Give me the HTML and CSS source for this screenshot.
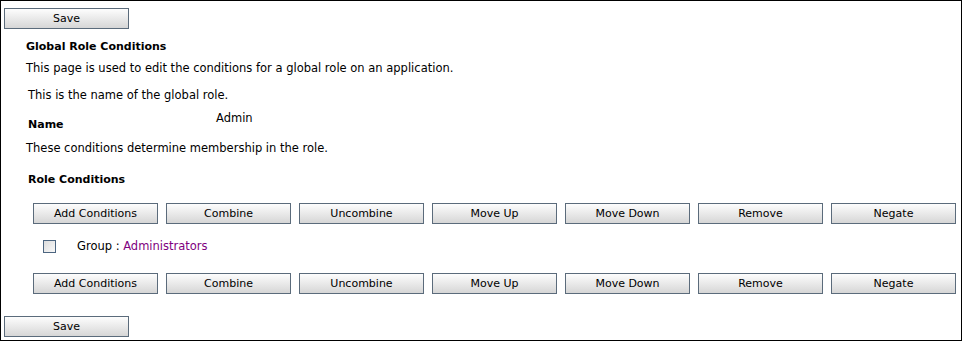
FILE: index.html
```html
<!DOCTYPE html>
<html lang="en">
<head>
    <meta charset="utf-8">
    <title>Global Role Conditions</title>
    <link rel="stylesheet" href="styles.css">
</head>
<body>
    <div class="page">
        <div class="save-bar">
            <button class="btn save">Save</button>
        </div>

        <div class="content">
            <h2 class="title">Global Role Conditions</h2>
            <p class="intro">This page is used to edit the conditions for a global role on an application.</p>

            <p class="help">This is the name of the global role.</p>
            <div class="name-row">
                <span class="label">Name</span>
                <span class="value">Admin</span>
            </div>

            <p class="intro conditions-help">These conditions determine membership in the role.</p>
            <h3 class="label section-label">Role Conditions</h3>

            <!-- toolbar top -->
            <div class="toolbar">
                <button class="btn">Add Conditions</button>
                <button class="btn">Combine</button>
                <button class="btn">Uncombine</button>
                <button class="btn">Move Up</button>
                <button class="btn">Move Down</button>
                <button class="btn">Remove</button>
                <button class="btn">Negate</button>
            </div>

            <div class="condition">
                <input type="checkbox" class="check">
                <span>Group : <a class="group-link">Administrators</a></span>
            </div>

            <!-- toolbar bottom -->
            <div class="toolbar">
                <button class="btn">Add Conditions</button>
                <button class="btn">Combine</button>
                <button class="btn">Uncombine</button>
                <button class="btn">Move Up</button>
                <button class="btn">Move Down</button>
                <button class="btn">Remove</button>
                <button class="btn">Negate</button>
            </div>
        </div>

        <div class="save-bar bottom">
            <button class="btn save">Save</button>
        </div>
    </div>
</body>
</html>
```

FILE: styles.css
```css
body {
    margin: 0;
    background: #fff;
    font-family: 'DejaVu Sans', Verdana, sans-serif;
    font-size: 11.5px;
    line-height: 15px;
    color: #000;
}

.page {
    box-sizing: border-box;
    width: 962px;
    height: 341px;
    border: 1px solid #000;
    padding: 7px 0 0 3px;
}

.save-bar {
    display: flex;
}

.btn {
    box-sizing: border-box;
    height: 21px;
    width: 125px;
    border: 1px solid #5b6b7b;
    background: linear-gradient(#fdfdfd, #d6d6d6);
    font-family: inherit;
    font-size: 11px;
    color: #000;
    padding: 0;
    cursor: pointer;
}

.content {
    padding-left: 22px;
}

.title {
    font-size: 11px;
    font-weight: bold;
    margin: 10px 0 0;
}

.intro {
    margin: 7px 0 0;
}

.help {
    margin: 12px 0 0 2px;
}

.name-row {
    display: flex;
    margin: 8px 0 0 2px;
}

.label {
    font-weight: bold;
    font-size: 11px;
}

.name-row .label {
    width: 188px;
    padding-top: 6px;
}

.conditions-help {
    margin-top: 9px;
}

.section-label {
    margin: 16px 0 0 2px;
}

.toolbar {
    display: flex;
    gap: 8px;
    margin: 16px 0 0 7px;
}

.condition {
    display: flex;
    align-items: center;
    margin: 14px 0 0 17px;
    height: 16px;
}

.check {
    appearance: none;
    box-sizing: border-box;
    width: 13px;
    height: 13px;
    margin: 0 21px 0 0;
    border: 1px solid #4c6580;
    background: linear-gradient(135deg, #dcdcdc, #f8f8f8);
}

.group-link {
    color: #800080;
}

.condition + .toolbar {
    margin-top: 19px;
}

.save-bar.bottom {
    margin-top: 22px;
}
```
